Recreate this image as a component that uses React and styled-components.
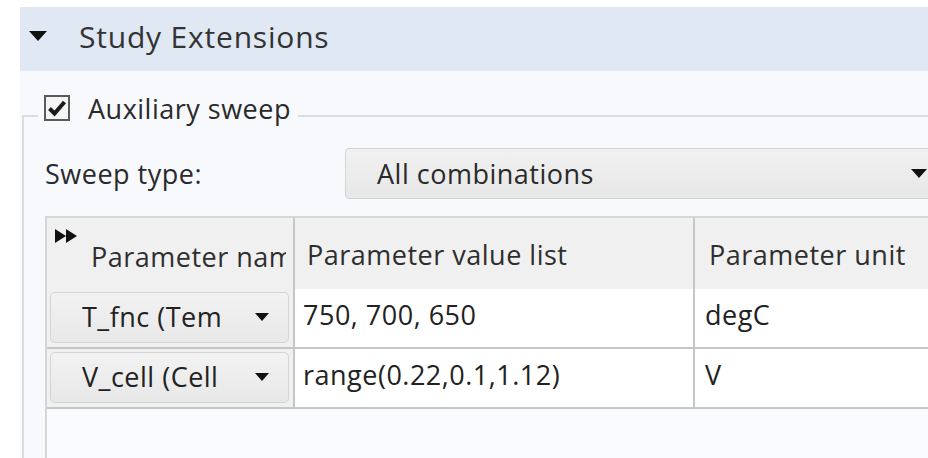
import React from "react";
import styled, { createGlobalStyle } from "styled-components";

const GlobalStyle = createGlobalStyle`
  html, body {
    margin: 0;
    padding: 0;
    background: #ffffff;
    overflow: hidden;
  }
  body {
    font-family: "Open Sans", "Noto Sans", sans-serif;
    color: #2a2a2a;
    letter-spacing: 0.5px;
  }
`;

const Page = styled.div`
  width: 1000px;
  height: 458px;
  padding: 7px 0 0 20px;
  box-sizing: border-box;
  display: flex;
  flex-direction: column;
`;

const SectionHeader = styled.div`
  height: 64px;
  flex: none;
  background: #dfe8f3;
  display: flex;
  align-items: center;
  padding: 0 0 6px 9px;
  box-sizing: border-box;
  gap: 32px;
  font-size: 30px;
  letter-spacing: 0.8px;
  color: #333;
`;

const Panel = styled.div`
  flex: 1;
  background: #f8f9fd;
  display: flex;
  flex-direction: column;
  min-height: 0;
`;

const Group = styled.fieldset`
  margin: 21px 0 0 2px;
  padding: 0 0 0 21px;
  border: 2px solid #dcdde1;
  border-right: none;
  border-bottom: none;
  min-width: 0;
  flex: 1;
  display: flex;
  flex-direction: column;
`;

const Legend = styled.legend`
  margin-left: -7px;
  padding: 0 7px 16px 6px;
  display: flex;
  align-items: center;
  gap: 18px;
  height: 32px;
  font-size: 27px;
  background: transparent;
`;

const CheckBox = styled.span`
  width: 22px;
  height: 22px;
  border: 2px solid #5a5a5a;
  background: #f4f4f4;
  display: flex;
  align-items: center;
  justify-content: center;
`;

const FieldRow = styled.div`
  display: flex;
  align-items: center;
  margin-top: 8px;
  font-size: 27px;
`;

const FieldLabel = styled.div`
  width: 300px;
  flex: none;
`;

const Combo = styled.div`
  width: 600px;
  height: 51px;
  box-sizing: border-box;
  border: 1px solid #d3d3d3;
  border-radius: 4px;
  background: linear-gradient(#f1f1f1, #e7e7e7);
  display: flex;
  align-items: center;
  justify-content: space-between;
  padding: 0 17px 0 31px;
`;

const DownArrow = styled.span`
  width: 0;
  height: 0;
  border-left: ${(p) => p.$size}px solid transparent;
  border-right: ${(p) => p.$size}px solid transparent;
  border-top: ${(p) => Math.round(p.$size * 1.15)}px solid #111;
  flex: none;
`;

const Grid = styled.div`
  margin-top: 17px;
  flex: 1;
  display: grid;
  grid-template-columns: 248px 400px 320px;
  grid-auto-rows: 60px;
  grid-template-rows: 71px;
  align-content: start;
  border-top: 2px solid #d6d6d6;
  border-left: 2px solid #d6d6d6;
  background: #fafbfe;
  font-size: 27px;
`;

const HeadCell = styled.div`
  background: #f0f0f0;
  border-right: ${(p) => (p.$last ? "none" : "2px solid #c6c6c6")};
  display: flex;
  align-items: center;
  padding: 2px 6px 0 ${(p) => p.$pad}px;
  overflow: hidden;
  white-space: nowrap;
  color: #2e2e2e;
`;

const NameHead = styled(HeadCell)`
  flex-direction: column;
  align-items: flex-start;
  justify-content: flex-start;
  padding: 10px 0 0 8px;
`;

const HeadIcon = styled.svg`
  display: block;
  flex: none;
`;

const NameHeadText = styled.div`
  margin: -4px 0 0 36px;
  width: 195px;
  overflow: hidden;
  line-height: 34px;
`;

const Cell = styled.div`
  background: ${(p) => (p.$shaded ? "#f0f0f0" : "#ffffff")};
  border-right: ${(p) => (p.$last ? "none" : "2px solid #c6c6c6")};
  border-bottom: 2px solid #c6c6c6;
  display: flex;
  align-items: center;
  padding: ${(p) => (p.$shaded ? "3px 4px 4px 3px" : `0 0 7px ${p.$pad}px`)};
  overflow: hidden;
  white-space: nowrap;
  color: #222;
`;

const PickButton = styled.div`
  flex: 1;
  height: 51px;
  box-sizing: border-box;
  border: 1px solid #d4d4d4;
  border-radius: 5px;
  background: linear-gradient(#f2f2f2, #e8e8e8);
  display: flex;
  align-items: center;
  padding: 0 19px 2px 31px;
  gap: 31px;
`;

const PickText = styled.span`
  width: 142px;
  overflow: hidden;
  white-space: nowrap;
  flex: none;
`;

const rows = [
  { name: "T_fnc (Temperature)", values: "750, 700, 650", unit: "degC" },
  { name: "V_cell (Cell voltage)", values: "range(0.22,0.1,1.12)", unit: "V" },
];

export default function App() {
  return (
    <>
      <GlobalStyle />
      <Page>
        <SectionHeader>
          <DownArrow $size={9} />
          <span>Study Extensions</span>
        </SectionHeader>
        <Panel>
          <Group>
            <Legend>
              <CheckBox>
                <svg width="20" height="18" viewBox="0 0 20 18">
                  <path d="M2.5 9.5 L7.5 14.5 L17.5 3" fill="none" stroke="#1a1a1a" strokeWidth="4" />
                </svg>
              </CheckBox>
              <span>Auxiliary sweep</span>
            </Legend>
            <FieldRow>
              <FieldLabel>Sweep type:</FieldLabel>
              <Combo>
                <span>All combinations</span>
                <DownArrow $size={8} />
              </Combo>
            </FieldRow>
            <Grid>
              <NameHead>
                <HeadIcon width="24" height="16" viewBox="0 0 24 16">
                  <path d="M0 1 L11 8 L0 15 Z M11 1 L22 8 L11 15 Z" fill="#111" />
                </HeadIcon>
                <NameHeadText>Parameter name</NameHeadText>
              </NameHead>
              <HeadCell $pad={12}>Parameter value list</HeadCell>
              <HeadCell $pad={14} $last>Parameter unit</HeadCell>
              {rows.map((r) => (
                <React.Fragment key={r.name}>
                  <Cell $shaded>
                    <PickButton>
                      <PickText>{r.name}</PickText>
                      <DownArrow $size={7} />
                    </PickButton>
                  </Cell>
                  <Cell $pad={8}>{r.values}</Cell>
                  <Cell $pad={10} $last>{r.unit}</Cell>
                </React.Fragment>
              ))}
            </Grid>
          </Group>
        </Panel>
      </Page>
    </>
  );
}
